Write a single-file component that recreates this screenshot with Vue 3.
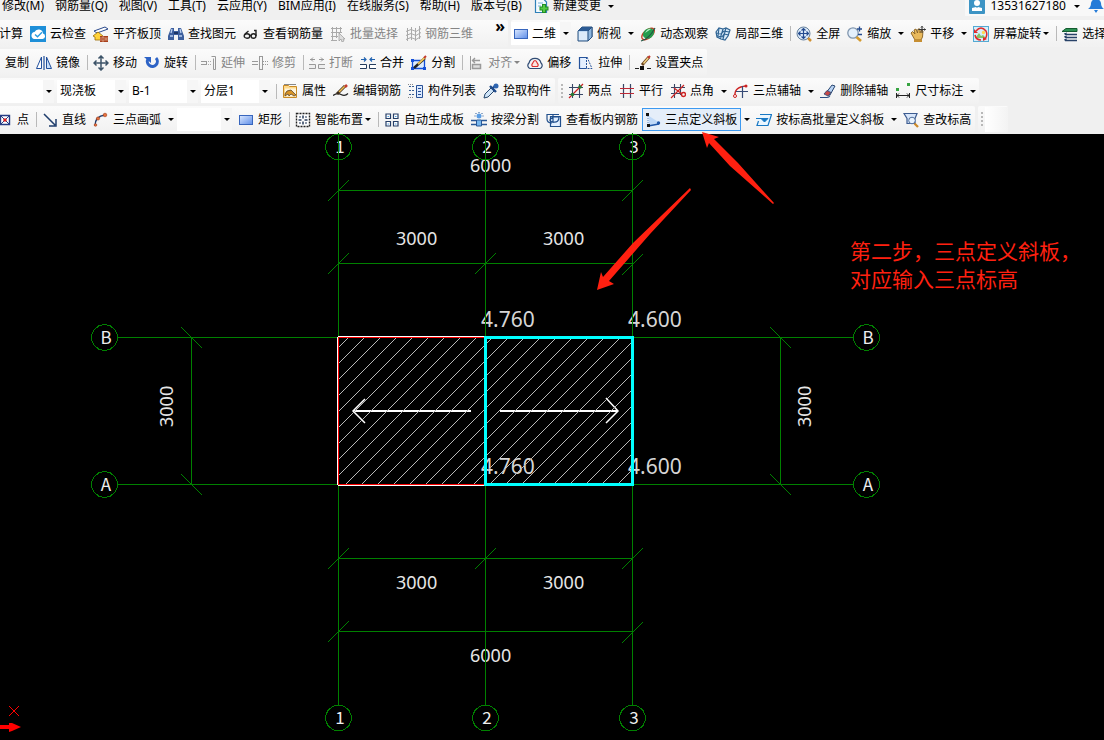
<script setup>
const icons = {
  cloud: '<rect width="16" height="16" fill="#1e8fd8"/><path d="M4 13h8.500a2.800 2.800 0 0 0 .5-5.500A4.500 4.500 0 0 0 4.500 6 3.600 3.600 0 0 0 4 13z" fill="#fff"/><path d="M5 8.500l2.500 2.300L12 6.300" stroke="#2a9be0" stroke-width="1.400" fill="none"/>',
  flat: '<path d="M1 5L12 1l3 2L4 7z" fill="#fff" stroke="#2b4a8c"/><path d="M0 10l5-4 5 4v4H2v-3z" fill="#ffd23a" stroke="#9a6a00" stroke-width=".8"/><path d="M7 10h8v6H7z" fill="#a8401c"/><path d="M7 12h8M7 14h8M10 10v2M13 12v2M10 14v2" stroke="#f0c8b0" stroke-width=".6"/>',
  find: '<path d="M3 2h3v3h4V2h3l3 8v4h-6V9H6v5H0v-4z" fill="#3c5f9e"/><path d="M2 10h3M11 10h3M4 3l-1 4M12 3l1 4" stroke="#b9d0f2" stroke-width="1.300"/><path d="M6 6h4v2H6z" fill="#1d3564"/>',
  glasses: '<g fill="none" stroke="#222" stroke-width="1.400"><ellipse cx="4" cy="10" rx="2.800" ry="2.200"/><ellipse cx="10.500" cy="10" rx="2.400" ry="2.200"/><path d="M6.500 9.500h2M13 10V4.500h-2M2 8l3.500-3"/></g>',
  batch: '<g stroke="#aaa" fill="none"><path d="M1 2.500h11M1 6.500h11M1 10.500h7M2.500 1v13M6.500 1v11M10.500 1v6M1 14.500h6"/></g><path d="M9 7v8l2-2 1 3 2-1-1-2h2z" fill="#ddd" stroke="#999" stroke-width=".7"/>',
  grid3: '<g stroke="#aaa" fill="none"><path d="M2.500 2v13M6.500 1v13M10.500 2v13M14.500 0v13M1 5.500l5-2 5 2 5-3M1 9.500l5-2 5 2 5-3M1 13.500l5-2 5 2 5-3"/></g>',
  rect: '<defs><linearGradient id="rectFill" x2="1" y2="1"><stop stop-color="#dce9ff"/><stop offset="1" stop-color="#5d8de8"/></linearGradient></defs><rect x="1.500" y="3.500" width="13" height="9" fill="url(#rectFill)" stroke="#3866bd"/>',
  cube: '<path d="M1 5l4-4h10v10l-4 4H1z" fill="#c2dcf5" stroke="#29507e"/><path d="M1 5l4-4h10l-4 4z" fill="#2c5b94"/><path d="M11 5l4-4v10l-4 4z" fill="#8db6df" stroke="#29507e"/><path d="M2 6h8v8H2z" fill="#dcebfa"/>',
  orbit: '<ellipse cx="8" cy="8" rx="7.500" ry="4" transform="rotate(-40 8 8)" fill="none" stroke="#c33c22" stroke-width="1.400"/><ellipse cx="8.500" cy="7.500" rx="6" ry="4.800" transform="rotate(-40 8.500 7.500)" fill="#259c4c"/><path d="M5 7q3-5 6-4-3 2-6 4z" fill="#b8eec6"/><path d="M1 15Q9 13 15 2" fill="none" stroke="#254" stroke-width="1.200"/>',
  local: '<path d="M1 6l3-4 4 1 3-1 4 2-2 6-3 4-4-1-4-2z" fill="#d7e9f8" stroke="#2d6292" stroke-width="1.200"/><path d="M8 3L5 13M11 2L8 13M4 2L3 10M1 7l5 1 3-3 5 1M2 10l5 1 2-3 5 1" fill="none" stroke="#2d6292" stroke-width="1.100"/>',
  full: '<circle cx="7.500" cy="7.500" r="6.500" fill="#dceaf8" stroke="#65809c"/><path d="M7.500 2.500v10M2.500 7.500h10M5.500 4.500l2-2 2 2M5.500 10.500l2 2 2-2M4.500 5.500l-2 2 2 2M10.500 5.500l2 2-2 2" fill="none" stroke="#244b8f" stroke-width="1.200"/><path d="M12 12l3 3" stroke="#d09032" stroke-width="2.500"/>',
  zoom: '<circle cx="6" cy="7" r="5.200" fill="#e4f0fc" stroke="#8096ae" stroke-width="1.300"/><path d="M9.500 11l4.500 4" stroke="#d49a2e" stroke-width="2.600"/><path d="M10 3h5M12.500 .5v5M11 8.500h4" stroke="#244b8f" stroke-width="1.300"/>',
  pan: '<path d="M1 7l1.500-1.500L5 8 4 4l2-1 1.500 4L8 3l2 0v4l1.500-3L13 5l-.5 6L11 14H5z" fill="#e8b95c" stroke="#876020" stroke-width=".9"/><path d="M12 0v7M8.500 3.500h7M11 1.500l1-1 1 1M14.500 2.500l1 1-1 1" fill="none" stroke="#333"/><path d="M4 13.500h8V16H4z" fill="#c68e32"/>',
  spin: '<rect x=".5" y=".5" width="15" height="15" fill="#d6effa" stroke="#55a9d3"/><path d="M3 11l3-4 2 3 2-1 3 3H3z" fill="#83c56a"/><circle cx="10.500" cy="6.500" r="1.700" fill="#ffd950"/><path d="M3 5q5-6 10 0 2 4-1 8M2 9q1 5 6 5" fill="none" stroke="#e12b2b" stroke-width="1.500"/><path d="M1 3v4h4zM10 15v-4l4 2z" fill="#e12b2b"/>',
  layers: '<path d="M0 5.500l4-3h11v3z" fill="#2d9254" stroke="#155c30"/><path d="M3 8.500h12M3 11.500h12M3 14.500h12" stroke="#284268" stroke-width="1.600"/><path d="M2 8l3-1M2 11l3-1M2 14l3-1" stroke="#284268"/>',
  copy: '<circle cx="10" cy="12" r="5" fill="#35588d"/>',
  mirror: '<path d="M5.500 2v11.500H.5z" fill="#fff" stroke="#214f9c"/><path d="M10.500 2v11.500h5z" fill="#c6ddf8" stroke="#214f9c"/><path d="M8 1v14" stroke="#214f9c" stroke-width="1.200"/>',
  move: '<path d="M8 1v14M1 8h14M5.500 3.500L8 1l2.500 2.500M5.500 12.500L8 15l2.500-2.500M3.500 5.500L1 8l2.500 2.500M12.500 5.500L15 8l-2.500 2.500" fill="none" stroke="#3c5368" stroke-width="1.500"/>',
  rotate: '<path d="M4 4a5 5 0 1 0 8-1" fill="none" stroke="#2d63c6" stroke-width="3"/><path d="M0 2h7v6z" fill="#2d63c6"/>',
  extend: '<path d="M0 6.500h6M0 9.500h6M5.500 6v4" stroke="#999"/><path d="M7 6.500h4M7 9.500h4" stroke="#aaa" stroke-dasharray="1 1"/><path d="M10.500 1.500h4v13h-2v-11" fill="none" stroke="#999"/>',
  trim: '<path d="M0 6.500h6M0 9.500h6" stroke="#999"/><path d="M11 6.500h5M11 9.500h5" stroke="#999" stroke-dasharray="1 1"/><path d="M7.500 1v14M10.500 1v14M7 1.500h4M7 14.500h4" stroke="#999"/>',
  breakIt: '<path d="M1 4.500h5M10 4.500h5M4 2.500l-2 2 2 2M12 2.500l2 2-2 2" fill="none" stroke="#999"/><path d="M0 9.500h6.500v4H0M16 9.500H9.500v4H16" fill="#eee" stroke="#999"/>',
  join: '<path d="M1 4.500h5M10 4.500h5M4 2.500l2 2-2 2M12 2.500l-2 2 2 2" fill="none" stroke="#2062b0" stroke-width="1.200"/><path d="M0 9.500h6.500v4H0M16 9.500H9.500v4H16" fill="#fff" stroke="#253c5c"/>',
  split: '<path d="M1.500 5.500h12v8h-12z" fill="#dcecff" stroke="#1450d8" stroke-width="1.300"/><path d="M0 4h3v3H0zM0 12h3v3H0zM12 12h3v3h-3z" fill="#1450d8"/><path d="M3 13L14 3" stroke="#222" stroke-width="2.500"/><path d="M7 9l7-6.500" stroke="#ecc35a" stroke-width="2"/><path d="M13 3l2-2" stroke="#c43a2e" stroke-width="2"/>',
  align: '<path d="M2.500 1v14" stroke="#999"/><path d="M4.500 9.500h8v4h-8z" fill="#ddd" stroke="#999" stroke-width="1.500"/><path d="M4 5.500h8M7 3L4.500 5.500 7 8" fill="none" stroke="#999" stroke-width="1.400"/>',
  offset: '<path d="M3 13.500a3.200 3.200 0 0 1-1-5.500 6.200 6.200 0 0 1 12 0 3.200 3.200 0 0 1-1 5.500z" fill="#f2f5f9" stroke="#304b73" stroke-width="1.200"/><path d="M5.500 11.500a2 2 0 0 1 0-3q2.500-6 5 0a2 2 0 0 1 0 3z" fill="#fbe5e2" stroke="#d33" stroke-width="1.200"/>',
  stretch: '<path d="M8.500 2.500h-7v11h7" fill="#e4efff" stroke="#26539b" stroke-width="1.200"/><path d="M8.500 2v12M9 2l5 11.500H8" fill="none" stroke="#26539b" stroke-dasharray="2 1"/>',
  grip: '<path d="M0 13.500h4M12 13.500h4" stroke="#222"/><path d="M5 11h4v4H5z" fill="#111"/><path d="M7 10l7-8" stroke="#6b4520" stroke-width="3"/><path d="M8.500 8.500l5-6" stroke="#f0cf80" stroke-width="1.500"/><path d="M13 3l2-2" stroke="#c43a2e" stroke-width="2.200"/>',
  props: '<path d="M1.500 2.500h5l1 1h7v11h-13z" fill="#ffd98a" stroke="#c98a24"/><path d="M3 5.500h11v8H3z" fill="#fff5da"/><path d="M3 11q1-4 6-4l5 5-2 1-3-2-2 2-1-2-3 2z" fill="#d89528" stroke="#4a3828" stroke-width=".7"/><path d="M2 1.500h12" stroke="#888"/>',
  editBar: '<path d="M0 12.500q4-3 8-1t7-1" fill="none" stroke="#222" stroke-width="1.200"/><path d="M4 11l8-8" stroke="#3c2b1c" stroke-width="3"/><path d="M6 9l6-6" stroke="#efbd51" stroke-width="1.600"/><path d="M12 4l2-2" stroke="#c43a2e" stroke-width="2.500"/>',
  list: '<path d="M1 3.500h5M1 7.500h5M1 11.500h5" stroke="#385f94" stroke-dasharray="2 1"/><path d="M8.500 2.500h6v12h-6z" fill="#dceaff" stroke="#285197"/><path d="M10 5.500h3M10 8.500h3M10 11.500h3" stroke="#285197"/><path d="M0 1.500h6M0 14.500h6" stroke="#888" stroke-dasharray="1 1"/>',
  pick: '<path d="M1 15l1-4 6-6 3 3-6 6z" fill="#d0e5f8" stroke="#26476d"/><path d="M7 3l6 6M9 6l4-4" stroke="#1f4a8a" stroke-width="2.400"/><circle cx="13" cy="3" r="2.500" fill="#2e65b0"/>',
  twoPt: '<path d="M4.500 1v14M11.500 1v14M1 4.500h14M1 11.500h14" stroke="#374766" stroke-width="1.100"/><path d="M1 15L15 1" stroke="#c22" stroke-width="1.200"/><circle cx="4.500" cy="11.500" r="1.800" fill="#287b33"/><circle cx="12" cy="4" r="1.800" fill="#287b33"/>',
  parallel: '<path d="M4.500 1v14M11.500 1v14" stroke="#374766" stroke-width="1.200"/><path d="M1 5.500h14M1 10.500h14" stroke="#bd2937" stroke-width="1.200"/>',
  ptAngle: '<path d="M4.500 1v14M10.500 1v11M1 4.500h14M1 10.500h10" stroke="#374766" stroke-width="1.100"/><path d="M1 15L14 2M4 5l8 6" stroke="#c22" stroke-width="1.200"/><circle cx="13.500" cy="11.500" r="2" fill="none" stroke="#c22" stroke-width="1.400"/>',
  arcAxis: '<path d="M2 13Q1 4 13 3" fill="none" stroke="#c22" stroke-width="1.400"/><circle cx="2" cy="13" r="1.500" fill="#fff" stroke="#c22"/><circle cx="13" cy="3" r="1.500" fill="#c22"/><path d="M9.500 3v12M3 8.500h12" stroke="#374b76" stroke-width="1.200"/>',
  erase: '<path d="M0 14.500h7q2 0 3-2" stroke="#2b4e83" fill="none" stroke-width="1.200"/><path d="M6 10l6-8 3 1-5 9z" fill="#b9d3f3" stroke="#274570"/><path d="M4 11l3-3.500 4 2L8 13z" fill="#c84848" stroke="#274570" stroke-width=".8"/>',
  dim: '<path d="M1.500 10v5M14.500 10v5M2 12.500h12M4 10.500l-2 2 2 2M12 10.500l2 2-2 2" fill="none" stroke="#222"/><path d="M1 5h3v3H1zM12 0h3v3h-3z" fill="#37a441"/>',
  point: '<path d="M3.500 3.500h9v9h-9z" fill="#fff" stroke="#253c84" stroke-width="1.400"/><path d="M4 4l8 8M12 4l-8 8" stroke="#253c84"/><circle cx="8" cy="8" r="1.800" fill="#d22"/>',
  line: '<path d="M2 2l11 11M14 7v7H7" fill="none" stroke="#1f3d6c" stroke-width="1.500"/>',
  arc: '<path d="M2 14Q2 4 12 3" fill="none" stroke="#243f6d" stroke-width="1.400"/><g fill="#e5713d" stroke="#a63c18" stroke-width=".6"><circle cx="2.500" cy="13" r="1.300"/><circle cx="5" cy="6.500" r="1.600"/><circle cx="12" cy="3" r="1.800"/></g>',
  smart: '<path d="M1.500 1.500h13v13h-13z" fill="#fff" stroke="#222" stroke-width="1.400" stroke-dasharray="2 1"/><path d="M8 3.500v3M8 9.500v3M3.500 8h3M9.500 8h3M4.500 4.500l1 1M11.500 4.500l-1 1M4.500 11.500l1-1M11.500 11.500l-1-1" stroke="#263a58" stroke-width="1.500"/>',
  gen: '<g fill="#fff" stroke="#263f68" stroke-width="1.200"><path d="M2 2h4.500v4.500H2zM9.500 2H14v4.500H9.500zM2 9.500h4.500V14H2zM9.500 9.500H14V14H9.500z"/></g><path d="M3.500 4.500h1.500M11 4.500h1.500M3.500 12h1.500M11 12h1.500" stroke="#4aa3e8"/>',
  beam: '<path d="M0 8.500h5M11 8.500h5M0 12.500h5M11 12.500h5" stroke="#285897" stroke-width="1.300"/><path d="M5.500 8h5v6h-5z" fill="#78b8ef" stroke="#285897"/><circle cx="8" cy="4" r="2.500" fill="#5a9de4"/><path d="M8 0v1M3.500 4h1M11.500 4h1M4.500 1l1 1M11.500 1l-1 1" stroke="#285897"/>',
  viewBar: '<path d="M4.500 4.500h10v10h-10z" fill="#e1efff" stroke="#214f8c" stroke-width="1.200"/><path d="M1 2.500h12M1 2v5q0 4 5 4M7 2v9M13 5q0 6-6 5t0-5h6" fill="none" stroke="#214f8c" stroke-width="1.200"/>',
  slope: '<path d="M4 4v10l11-3z" fill="#bfd9f8"/><path d="M3 4v8" stroke="#5c88c2" stroke-dasharray="1 1"/><path d="M3 14l11-2" stroke="#1e56a8" stroke-width="1.300"/><path d="M1 1h3v3H1zM2 12h3v3H2z" fill="#111"/><circle cx="13.500" cy="11" r="1.700" fill="#1e56a8"/>',
  level: '<path d="M4 2.500h11.500L12 13.500H1L2.500 9" fill="#eaf6ff" stroke="#1778c4" stroke-width="1.200"/><path d="M0 6.500h5M5 6.500h7L8.500 10z" fill="#1778c4" stroke="#1778c4"/>',
  check: '<path d="M1 1.500h13l-2 5v5H4v-5z" fill="#d8e6fa" stroke="#3d5c91" stroke-width="1.200"/><circle cx="9" cy="8.500" r="3.300" fill="#eaf4ff" stroke="#506f9b"/><path d="M11.500 11.500L15 15" stroke="#cd8a29" stroke-width="2.300"/>',
  newFile: '<path d="M2.500 0v14.500h11V4l-4-4z" fill="#f4faff" stroke="#2e80b8" stroke-width="1.200"/><path d="M5 5h5M5 8h3" stroke="#77b2d5"/><path d="M11 6v9M6.500 10.500h9" stroke="#1f8d24" stroke-width="4"/><path d="M11 7v7M7.500 10.500h7" stroke="#55c944" stroke-width="2"/>',
  user: '<rect width="16" height="16" rx="1" fill="#3d94c4"/><circle cx="8" cy="5" r="3" fill="#fff"/><path d="M3 10l4-1 1 1 1-1 4 1v3H3z" fill="#fff"/>',
  bell: '<path d="M0 11q3-2 3-6 1-4 5-4t5 4q0 4 3 6zM6 12h4l-2 3z" fill="#247bd8"/>',
}

const menus = ['修改(M)', '钢筋量(Q)', '视图(V)', '工具(T)', '云应用(Y)', 'BIM应用(I)', '在线服务(S)', '帮助(H)', '版本号(B)']

const b = (icon, text, extra = {}) => ({ kind: 'button', icon, text, ...extra })
const sep = { kind: 'sep' }
const split = { split: true }
const off = { off: true }

// Each row lists its docked bars; scroll is how far the row runs past the left edge.
const rows = [
  { scroll: 4, bars: [
    [b('', '计算'), b('cloud', '云检查'), b('flat', '平齐板顶'), b('find', '查找图元'), b('glasses', '查看钢筋量'), b('batch', '批量选择', off), b('grid3', '钢筋三维', off), { kind: 'more' }],
    [{ kind: 'select', size: 'mid', icon: 'rect', text: '二维', label: '视图模式' }, b('cube', '俯视', split), b('orbit', '动态观察'), b('local', '局部三维'), sep, b('full', '全屏'), b('zoom', '缩放', split), b('pan', '平移', split), b('spin', '屏幕旋转', { menu: true }), sep, b('layers', '选择')],
  ] },
  { scroll: 18, bars: [
    [b('copy', '复制'), b('mirror', '镜像'), sep, b('move', '移动'), b('rotate', '旋转'), sep, b('extend', '延伸', off), b('trim', '修剪', off), sep, b('breakIt', '打断', off), b('join', '合并'), b('split', '分割'), sep, b('align', '对齐', { off: true, menu: true }), b('offset', '偏移'), b('stretch', '拉伸'), sep, b('grip', '设置夹点')],
  ] },
  { scroll: 1, low: true, bars: [
    [{ kind: 'select', size: 'small', text: '', label: '楼层' }, { kind: 'select', size: 'wide', text: '现浇板', label: '构件类型' }, { kind: 'select', size: 'wide', text: 'B-1', label: '构件名称' }, { kind: 'select', size: 'wide', text: '分层1', label: '分层' }, sep, b('props', '属性'), b('editBar', '编辑钢筋'), b('list', '构件列表'), b('pick', '拾取构件')],
    [{ kind: 'handle' }, b('twoPt', '两点'), b('parallel', '平行'), b('ptAngle', '点角', split), b('arcAxis', '三点辅轴', split), b('erase', '删除辅轴'), b('dim', '尺寸标注', split)],
  ] },
  { scroll: 6, bars: [
    [b('point', '点'), sep, b('line', '直线'), b('arc', '三点画弧', split), { kind: 'select', size: 'small', text: '', label: '画弧方式' }, b('rect', '矩形'), sep, b('smart', '智能布置', { menu: true }), sep, b('gen', '自动生成板'), b('beam', '按梁分割'), b('viewBar', '查看板内钢筋'), b('slope', '三点定义斜板', { split: true, active: true }), b('level', '按标高批量定义斜板', split), b('check', '查改标高')],
    [{ kind: 'handle' }, { kind: 'blank' }],
  ] },
]

const bubble = (x, y, name) => ({
  x, y, name,
  points: Array.from({ length: 14 }, (_, i) => {
    const a = (i * Math.PI) / 7 - Math.PI / 2
    return `${(x + 13 * Math.cos(a)).toFixed(1)},${(y + 13 * Math.sin(a)).toFixed(1)}`
  }).join(' '),
})
const bubbles = [
  ...[['1', 338.5], ['2', 485.5], ['3', 632.5]].flatMap(([n, x]) => [bubble(x, 147, n), bubble(x, 718, n)]),
  ...[['B', 337.5], ['A', 484.5]].flatMap(([n, y]) => [bubble(104.5, y, n), bubble(866.5, y, n)]),
]
const dims = [
  [470, 172, '6000'], [396, 245, '3000'], [543, 245, '3000'],
  [396, 589, '3000'], [543, 589, '3000'], [470, 662, '6000'],
]
const levels = [[481, 327, '4.760'], [628, 327, '4.600'], [481, 474, '4.760'], [628, 474, '4.600']]
const ticks = [
  [338, 190], [632, 190], [338, 263], [485, 263], [632, 264],
  [338, 558], [485, 558], [632, 558], [338, 631], [632, 632],
]
const sideTicks = [[191, 337], [191, 484], [780, 337], [780, 484]]
const hatch = Array.from({ length: 28 }, (_, i) => 686 + i * 16)
</script>

<template>
  <main class="app">
    <header class="tools">
      <nav class="menu" aria-label="主菜单">
        <button v-for="m in menus" :key="m" class="menu-item" type="button">{{ m }}</button>
        <button class="menu-new" type="button">
          <svg class="icon" viewBox="0 0 16 16" v-html="icons.newFile"></svg>新建变更<i class="tri"></i>
        </button>
        <div class="account">
          <button class="user" type="button">
            <svg class="icon" viewBox="0 0 16 16" v-html="icons.user"></svg>13531627180<i class="tri"></i>
          </button>
          <button class="bell" type="button" aria-label="消息">
            <svg class="icon" viewBox="0 0 16 16" v-html="icons.bell"></svg>
          </button>
        </div>
      </nav>
      <div v-for="(row, r) in rows" :key="r" class="row" :class="{ low: row.low }" :style="{ marginLeft: -row.scroll + 'px' }">
        <div v-for="(bar, i) in row.bars" :key="i" class="bar">
          <template v-for="(it, k) in bar" :key="k">
            <template v-if="it.kind === 'button'">
              <button class="tool" :class="{ active: it.active }" :disabled="it.off" type="button">
                <svg v-if="it.icon" class="icon" viewBox="0 0 16 16" v-html="icons[it.icon]"></svg>
                <span>{{ it.text }}</span>
                <i v-if="it.menu" class="tri inner"></i>
              </button>
              <button v-if="it.split" class="drop" type="button" :aria-label="it.text + '选项'"><i class="tri"></i></button>
            </template>
            <i v-else-if="it.kind === 'sep'" class="sep"></i>
            <i v-else-if="it.kind === 'handle'" class="handle"></i>
            <i v-else-if="it.kind === 'blank'" class="blank"></i>
            <button v-else-if="it.kind === 'more'" class="more" type="button" aria-label="更多">»</button>
            <label v-else class="combo" :class="it.size">
              <svg v-if="it.icon" class="icon" viewBox="0 0 16 16" v-html="icons[it.icon]"></svg>
              <select :aria-label="it.label"><option>{{ it.text }}</option></select>
              <span class="combo-arrow"><i class="tri"></i></span>
            </label>
          </template>
        </div>
      </div>
    </header>

    <section class="canvas">
      <svg class="drawing" viewBox="0 134 1104 606" role="img" aria-label="板平面图">
        <defs>
          <clipPath id="slab"><rect x="339" y="338" width="293" height="146" /></clipPath>
        </defs>
        <g class="level">
          <text v-for="(l, i) in levels" :key="i" :x="l[0]" :y="l[1]">{{ l[2] }}</text>
        </g>
        <g class="dim">
          <text v-for="(d, i) in dims" :key="i" :x="d[0]" :y="d[1]">{{ d[2] }}</text>
          <text transform="translate(173 427) rotate(-90)">3000</text>
          <text transform="translate(811 427) rotate(-90)">3000</text>
        </g>
        <g class="name">
          <text v-for="(c, i) in bubbles" :key="i" :x="c.x + 1.5" :y="c.y + 6">{{ c.name }}</text>
        </g>
        <g class="axis">
          <path d="M338.500 134V705M485.500 134V705M632.500 134V705M117 337.500H854M117 484.500H854M338 190.500H633M338 263.500H633M338 558.500H633M338 631.500H633M191.500 337V484M780.500 337V484" />
          <path v-for="(t, i) in ticks" :key="'t' + i" :d="`M${t[0] - 10} ${t[1] + 11}l21 -21`" />
          <path v-for="(t, i) in sideTicks" :key="'s' + i" :d="`M${t[0] - 10} ${t[1] - 10}l21 21`" />
          <polygon v-for="(c, i) in bubbles" :key="'b' + i" :points="c.points" />
        </g>
        <g class="span">
          <path d="M353 411H471M500 411H618" />
          <path class="head" d="M365 399L353 411L365 423M606 398L618 411L606 423" />
        </g>
        <g class="hatch" clip-path="url(#slab)">
          <path v-for="c in hatch" :key="c" :d="`M${c - 338} 338L${c - 485} 485`" />
        </g>
        <path class="edge-white" d="M338 336.500H485M337.500 337V485M338 485.500H485" />
        <path class="edge-red" d="M485 337.500H338.500V484.500H485" />
        <rect class="picked" x="485.500" y="337.500" width="147" height="147" />
        <g class="mark">
          <polygon points="597,290 601,272 603,277 633,243 690,188 691,190 650,234 609,281 614,284" />
          <polygon points="702,132 719,137 714,139 738,163 774,203 773,204 730,166 709,143 707,148" />
        </g>
        <g class="note">
          <text x="850" y="259">第二步，三点定义斜板，</text>
          <text x="850" y="287">对应输入三点标高</text>
        </g>
        <g class="origin">
          <path d="M9 706l10 10M19 706l-10 10" />
          <polygon points="0,725 9,725 9,723 12,723 21,727 12,731 9,732 9,729 0,729" />
        </g>
      </svg>
    </section>
  </main>
</template>

<style>
body {
  background: #000;
}
</style>

<style scoped>
.app {
  display: flex;
  flex-direction: column;
  min-height: 100vh;
  overflow: hidden;
  background: #000;
  color: #000;
  font: 12px/16px "Noto Sans", "Noto Sans CJK SC", sans-serif;
}
.tools {
  display: flex;
  flex-direction: column;
  gap: 2px;
  padding-bottom: 1px;
  background: #f0f0f0;
}
button {
  display: flex;
  align-items: center;
  flex: none;
  margin: 0;
  padding: 0;
  border: 0;
  background: none;
  color: inherit;
  font: inherit;
  white-space: nowrap;
}
.icon {
  display: block;
  flex: none;
  width: 16px;
  height: 16px;
}
.tri {
  flex: none;
  border: 3px solid transparent;
  border-top-color: currentColor;
  border-bottom: 0;
}
.menu {
  display: flex;
  align-items: center;
  height: 12px;
  margin: 0 0 6px -3px;
}
.menu-item {
  padding: 0 6px 0 5px;
}
.menu-new {
  gap: 4px;
  padding-left: 5px;
}
.menu-new .tri,
.user .tri {
  margin-left: 3px;
}
.account {
  display: flex;
  align-items: center;
  flex: 0 0 134px;
  gap: 8px;
  height: 20px;
  margin-left: auto;
  background: #f8f8f8;
}
.user {
  gap: 5px;
  padding-left: 4px;
}
.row {
  display: flex;
  gap: 3px;
  height: 27px;
}
.row.low {
  height: 26px;
}
.bar {
  display: flex;
  align-items: center;
  flex: none;
  border-radius: 2px;
  background: linear-gradient(#fbfbfb, #f1f1f1);
}
.tool {
  gap: 4px;
  height: 23px;
  padding: 0 4px 0 3px;
}
.tool:disabled {
  color: #858585;
}
.tool.active {
  background: #e5eef9;
  box-shadow: inset 0 0 0 1px #3c99f0;
}
.inner {
  margin-left: -2px;
}
.drop {
  justify-content: center;
  width: 12px;
  height: 23px;
}
.sep {
  width: 1px;
  height: 15px;
  margin: 0 2px 0 3px;
  background: #b9b9b9;
}
.handle {
  width: 2px;
  height: 15px;
  margin: 0 2px 0 3px;
  background: repeating-linear-gradient(#b8b8b8 0 2px, transparent 2px 4px);
}
.blank {
  width: 23px;
  height: 25px;
  background: linear-gradient(90deg, #fff, #f3f3f3);
}
.more {
  align-self: flex-start;
  justify-content: flex-end;
  width: 31px;
  padding-right: 3px;
  font-size: 16px;
  line-height: 12px;
  font-weight: 700;
}
.combo {
  display: flex;
  align-items: center;
  flex: none;
  height: 23px;
  margin-right: 3px;
  background: #fff;
}
.combo .icon {
  margin-left: 2px;
}
.combo select {
  flex: 1;
  min-width: 0;
  height: 100%;
  padding: 0 0 0 3px;
  border: 0;
  background: none;
  color: inherit;
  font: inherit;
  appearance: none;
}
.combo-arrow {
  display: flex;
  align-items: center;
  justify-content: center;
  width: 11px;
  height: 100%;
  background: #f6f6f6;
}
.small {
  width: 55px;
}
.mid {
  width: 60px;
}
.wide {
  width: 69px;
}
.canvas {
  flex: 1;
  background: #000;
}
.drawing {
  display: block;
  width: 100%;
  overflow: visible;
  pointer-events: none;
}
.level {
  fill: #d6d6d6;
  font-size: 21px;
}
.dim {
  fill: #e6e6e6;
  font-size: 18px;
}
.name {
  fill: #eee;
  font-family: "Noto Sans CJK SC", sans-serif;
  font-size: 17px;
  text-anchor: middle;
}
.axis {
  fill: none;
  stroke: #008000;
  shape-rendering: crispEdges;
}
.hatch {
  stroke: #b8b8b8;
  shape-rendering: crispEdges;
}
.span {
  fill: none;
  stroke: #fff;
  stroke-width: 2;
}
.head {
  stroke-width: 1.5;
}
.edge-white {
  fill: none;
  stroke: #fff;
}
.edge-red {
  fill: none;
  stroke: #f00;
}
.picked {
  fill: none;
  stroke: #0ff;
  stroke-width: 3;
  shape-rendering: crispEdges;
}
.mark {
  fill: #ff2010;
}
.note {
  fill: #ff2010;
  font-family: "Noto Sans CJK SC", sans-serif;
  font-size: 21px;
}
.origin {
  fill: #f00;
  stroke: #f00;
  stroke-width: 1;
}
.origin polygon {
  stroke: none;
}
</style>
